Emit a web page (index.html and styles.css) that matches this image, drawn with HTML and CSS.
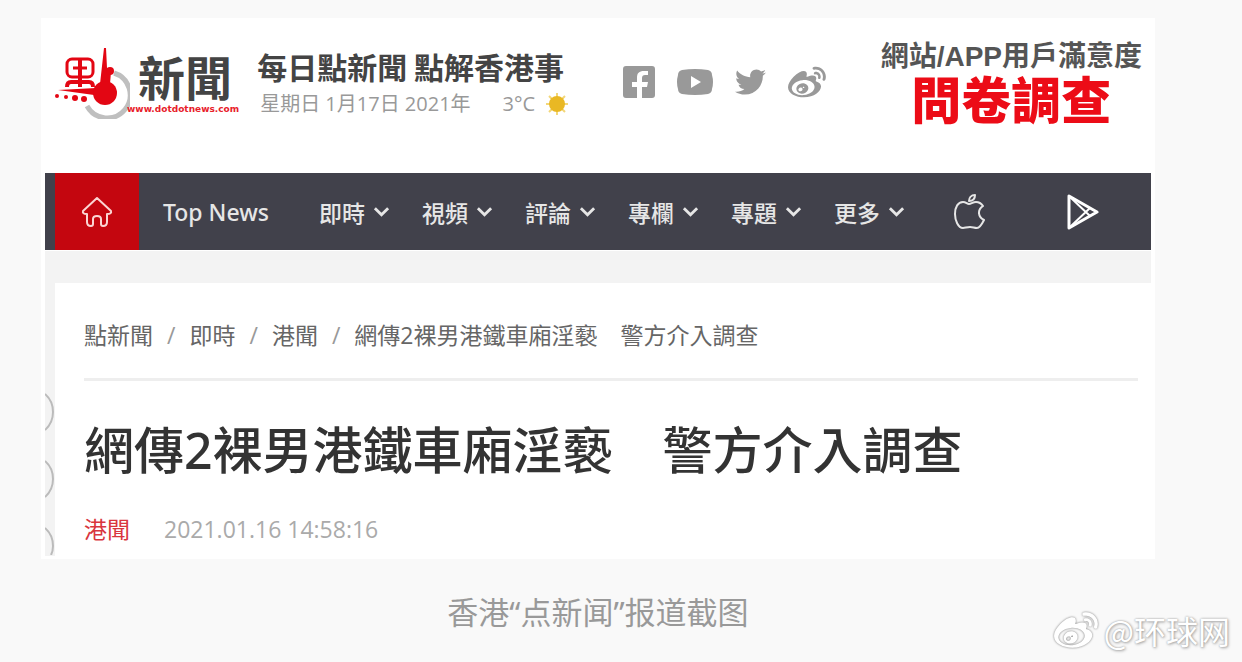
FILE: index.html
```html
<!DOCTYPE html>
<html lang="zh-Hant">
<head>
<meta charset="UTF-8">
<meta name="viewport" content="width=device-width, initial-scale=1.0">
<title>點新聞</title>
<link rel="stylesheet" href="styles.css">
</head>
<body>
<svg class="defs" aria-hidden="true">
  <symbol id="chevron" viewBox="0 0 18 12"><path d="M2 2l7 7 7-7" fill="none" stroke="currentColor" stroke-width="3"/></symbol>
  <symbol id="weibo" viewBox="0 30 514 418"><path d="M407 177.6c7.6-24-13.4-46.8-37.4-41.7-22 4.8-28.8-28.1-7.1-32.8 50.1-10.9 92.3 37.1 76.5 84.8-6.8 21.2-38.8 10.8-32-10.3zM214.8 446.7C108.5 446.7 0 395.3 0 310.4c0-44.3 28-95.4 76.3-143.7C176 67 279.5 65.8 249.9 161c-4 13.1 12.3 5.7 12.3 6 79.5-33.6 140.5-16.8 114 51.4-3.7 9.4 1.1 10.9 8.3 13.1 135.7 42.3 34.8 215.2-169.7 215.2zm143.7-146.3c-5.4-55.7-78.5-94-163.4-85.7-84.8 8.6-148.8 60.3-143.4 116s78.5 94 163.4 85.7c84.8-8.6 148.8-60.3 143.4-116zM347.9 35.1c-25.9 5.6-16.8 43.7 8.3 38.3 72.3-15.2 134.8 52.8 111.7 124-7.4 24.2 29.1 37 37.4 12 31.9-99.8-55.1-195.9-157.4-174.3zm-78.5 311c-17.1 38.8-66.8 60-109.1 46.3-40.8-13.1-58-53.4-40.3-89.7 17.7-35.4 63.1-55.4 103.4-45.1 42 10.8 63.1 50.2 46 88.5zm-86.3-30c-12.9-5.4-30 .3-38 12.9-8.3 12.9-4.3 28 8.6 34 13.1 6 30.8.3 39.1-12.9 8-13.1 3.7-28.3-9.7-34zm32.6-13.4c-5.1-1.7-11.4.6-14.3 5.4-2.9 5.1-1.4 10.6 3.7 12.9 5.1 2 11.7-.3 14.6-5.4 2.8-5.2 1.1-10.9-4-12.9z" fill="currentColor"/></symbol>
</svg>
<figure class="figure">
  <div class="sheet">
    <header class="header">
      <a class="brand" href="#">
        <svg class="brand-mark" width="76" height="72" viewBox="0 0 76 72" aria-hidden="true">
          <path d="M60 26A23 23 0 1 1 33 59" fill="none" stroke="#bfbfbf" stroke-width="5"/>
          <g fill="none" stroke="#e30613" stroke-width="3">
            <rect x="13" y="12" width="26" height="18" rx="5"/>
            <path d="M26 12v28M13 40q0-5 4-5h18q4 0 4 5" stroke-width="4"/>
            <path d="M19 21h14"/>
          </g>
          <path d="M50 1h2l1 20 4 4-1 12H46z" fill="#e30613"/>
          <path d="M4 43l38-2 6-3v14l-8-4z" fill="#e30613"/>
          <g fill="#e30613">
            <circle cx="51" cy="46" r="12"/>
            <circle cx="56" cy="24" r="4"/>
            <circle cx="3" cy="49" r="2"/>
            <circle cx="12" cy="50" r="2"/>
            <circle cx="21" cy="51" r="3"/>
            <circle cx="30" cy="52" r="3"/>
          </g>
        </svg>
        <span class="brand-text">
          <span class="brand-name">新聞</span>
          <span class="brand-url">www.dotdotnews.com</span>
        </span>
      </a>
      <div class="slogan">
        <p class="slogan-text">每日點新聞 點解香港事</p>
        <p class="slogan-date">
          <span>星期日 1月17日 2021年</span>
          <span class="temp">3°C</span>
          <svg width="24" height="24" viewBox="0 0 24 24" aria-hidden="true">
            <path d="M12 1v22M1 12h22M4 4l16 16M20 4L4 20" stroke="#f3d778" stroke-width="2"/>
            <circle cx="12" cy="12" r="8" fill="#e9b824"/>
          </svg>
        </p>
      </div>
      <div class="social">
        <a href="#" aria-label="Facebook">
          <svg width="32" height="34" viewBox="0 0 32 34"><path fill="currentColor" d="M3 1h26a3 3 0 0 1 3 3v26a3 3 0 0 1-3 3H19V22h5l1-5h-6v-4c0-2 1-3 3-3h3V6h-4c-5 0-7 2-7 7v4H9v5h5v11H3a3 3 0 0 1-3-3V4a3 3 0 0 1 3-3z"/></svg>
        </a>
        <a href="#" aria-label="YouTube">
          <svg width="36" height="26" viewBox="0 0 36 26"><path fill="currentColor" fill-rule="evenodd" d="M5 1Q18-1 31 1q4 1 4 5 2 7 0 14 0 4-4 5-13 2-26 0-4-1-4-5-2-7 0-14 0-4 4-5zm9 6v12l10-6z"/></svg>
        </a>
        <a href="#" aria-label="Twitter">
          <svg width="31" height="28" viewBox="0 48 512 416"><path fill="currentColor" d="M459.37 151.716c.325 4.548.325 9.097.325 13.645 0 138.72-105.583 298.558-298.558 298.558-59.452 0-114.68-17.219-161.137-47.106 8.447.974 16.568 1.299 25.34 1.299 49.055 0 94.213-16.568 130.274-44.832-46.132-.975-84.792-31.188-98.112-72.772 6.498.974 12.995 1.624 19.818 1.624 9.421 0 18.843-1.3 27.614-3.573-48.081-9.747-84.143-51.98-84.143-102.985v-1.299c13.969 7.797 30.214 12.67 47.431 13.319-28.264-18.843-46.781-51.005-46.781-87.391 0-19.492 5.197-37.36 14.294-52.954 51.655 63.675 129.3 105.258 216.365 109.807-1.624-7.797-2.599-15.918-2.599-24.04 0-57.828 46.782-104.934 104.934-104.934 30.213 0 57.502 12.67 76.67 33.137 23.715-4.548 46.456-13.32 66.599-25.34-7.798 24.366-24.366 44.833-46.132 57.827 21.117-2.273 41.584-8.122 60.426-16.243-14.292 20.791-32.161 39.308-52.628 54.253z"/></svg>
        </a>
        <a href="#" aria-label="微博">
          <svg width="38" height="32"><use href="#weibo"/></svg>
        </a>
      </div>
      <a class="survey" href="#">
        <span class="survey-top">網站/APP用戶滿意度</span>
        <span class="survey-main">問卷調查</span>
      </a>
    </header>

    <nav class="nav">
      <a class="home" href="#" aria-label="首頁">
        <svg width="32" height="32" viewBox="0 0 32 32" fill="none" stroke="#fbd5d3" stroke-width="2" stroke-linejoin="round"><path d="M16 2L2 15q-1 3 4 3v8q0 4 4 4 2 0 2-2v-5q0-3 4-3t4 3v5q0 2 2 2 4 0 4-4v-8q5 0 4-3z"/></svg>
      </a>
      <a class="top-news" href="#">Top News</a>
      <div class="menu">
        <a href="#">即時<svg width="17" height="12"><use href="#chevron"/></svg></a>
        <a href="#">視頻<svg width="17" height="12"><use href="#chevron"/></svg></a>
        <a href="#">評論<svg width="17" height="12"><use href="#chevron"/></svg></a>
        <a href="#">專欄<svg width="17" height="12"><use href="#chevron"/></svg></a>
        <a href="#">專題<svg width="17" height="12"><use href="#chevron"/></svg></a>
        <a href="#">更多<svg width="17" height="12"><use href="#chevron"/></svg></a>
      </div>
      <div class="apps">
        <a href="#" aria-label="App Store">
          <svg width="32" height="36" viewBox="0 0 32 36" fill="none" stroke="currentColor" stroke-width="2" stroke-linejoin="round"><path d="M16 10c2 0 4-2 7-2 3 0 5 1 7 4-6 4-5 11 1 14-2 4-4 8-7 8s-4-1-7-1-5 1-7 1C5 34 2 26 2 20 2 13 5 8 10 8c3 0 4 2 6 2zM16 7c0-3 2-6 6-6 0 4-2 6-6 6z"/></svg>
        </a>
        <a href="#" aria-label="Google Play">
          <svg width="32" height="36" viewBox="0 0 32 36" fill="none" stroke="#fff" stroke-width="3" stroke-linejoin="round"><path d="M2 2v32l28-16z"/><path d="M3 3l20 19M3 33l20-19" stroke-width="2"/></svg>
        </a>
      </div>
    </nav>

    <div class="content">
      <div class="gutter" aria-hidden="true">
        <svg width="10" height="38" viewBox="0 0 10 38"><path d="M0 1q8 7 8 18T0 37"/></svg>
        <svg width="10" height="38" viewBox="0 0 10 38"><path d="M0 1q8 7 8 18T0 37"/></svg>
        <svg width="10" height="28" viewBox="0 0 10 28"><path d="M0 1q8 7 8 18 0 5-2 9"/></svg>
      </div>
      <article class="article">
        <nav class="breadcrumb">
          <a href="#">點新聞</a><span class="sep">/</span><a href="#">即時</a><span class="sep">/</span><a href="#">港聞</a><span class="sep">/</span><span>網傳2裸男港鐵車廂淫褻　警方介入調查</span>
        </nav>
        <h1 class="title">網傳2裸男港鐵車廂淫褻　警方介入調查</h1>
        <p class="meta"><a href="#">港聞</a><time datetime="2021-01-16T14:58:16">2021.01.16 14:58:16</time></p>
      </article>
    </div>
  </div>
  <figcaption class="caption" lang="zh-Hans">香港“点新闻”报道截图</figcaption>
</figure>
<div class="watermark" lang="zh-Hans">
  <svg width="44" height="38"><use href="#weibo"/></svg>
  <span>@环球网</span>
</div>
</body>
</html>
```
FILE: styles.css
```css
* { box-sizing: border-box; }
body {
  position: relative;
  min-height: 100vh;
  margin: 0;
  background: #f9f9f9;
  font-family: "Open Sans", "Noto Sans CJK TC", sans-serif;
  color: #333;
}
a { color: inherit; text-decoration: none; }
p { margin: 0; }
svg { display: block; flex: none; }
.defs { position: absolute; width: 0; height: 0; }

.figure {
  margin: 0;
  padding: 18px 87px 0 41px;
}
.sheet { padding-bottom: 3px; background: #fff; }

/* header */
.header {
  display: flex;
  align-items: flex-start;
  height: 155px;
  padding: 20px 13px 0;
  white-space: nowrap;
}
.brand { display: flex; padding-top: 9px; }
.brand-text {
  display: flex;
  flex-direction: column;
  margin-left: -3px;
}
.brand-name {
  padding: 10px 0 0 11px;
  font-family: "Liberation Sans", "Noto Sans CJK TC", sans-serif;
  font-size: 47px;
  font-weight: 700;
  line-height: 46px;
  color: #444;
}
.brand-url {
  font-family: "DejaVu Sans", sans-serif;
  font-size: 9px;
  font-weight: 700;
  line-height: 12px;
  color: #e8202a;
}
.slogan { margin-left: 18px; padding-top: 10px; }
.slogan-text {
  font-family: "Noto Sans CJK TC", sans-serif;
  font-size: 30px;
  font-weight: 700;
  line-height: 36px;
  color: #444;
}
.slogan-date {
  display: flex;
  align-items: center;
  padding-left: 3px;
  font-size: 20px;
  line-height: 40px;
  color: #999;
}
.temp { margin: 0 10px 0 32px; }
.social {
  display: flex;
  align-items: center;
  gap: 22px;
  margin-left: 54px;
  padding-top: 27px;
  color: #999;
}
.survey {
  display: flex;
  flex-direction: column;
  align-items: center;
  margin-left: auto;
  padding-top: 2px;
  font-family: "Liberation Sans", "Noto Sans CJK TC", sans-serif;
  font-weight: 700;
}
.survey-top { font-size: 28px; line-height: 34px; color: #555; }
.survey-main { font-size: 50px; font-weight: 900; line-height: 56px; color: #ec0c17; }

/* nav bar */
.nav {
  display: flex;
  align-items: center;
  height: 77px;
  margin: 0 4px;
  padding-left: 10px;
  background: #41414b;
  font-family: "Noto Sans", "Noto Sans CJK TC", sans-serif;
  font-size: 23px;
  font-weight: 500;
  color: #e6e6e6;
  white-space: nowrap;
}
.home {
  display: flex;
  align-items: center;
  justify-content: center;
  width: 84px;
  height: 100%;
  background: #c4060f;
}
.top-news { margin: 0 50px 0 24px; }
.menu { display: flex; gap: 32px; }
.menu a { display: flex; align-items: center; gap: 8px; }
.apps { display: flex; gap: 82px; margin-left: 48px; }

/* article */
.content {
  display: flex;
  margin: 1px 0 0 4px;
}
.gutter {
  display: flex;
  flex-direction: column;
  gap: 29px;
  width: 10px;
  padding-top: 142px;
  background: #f3f3f3;
  fill: none;
  stroke: #bbb;
  stroke-width: 2px;
}
.article {
  flex: 1;
  margin-right: 4px;
  padding: 34px 13px 12px 29px;
  border-top: 32px solid #f3f3f3;
}
.breadcrumb {
  padding-bottom: 25px;
  border-bottom: 3px solid #eee;
  font-size: 23px;
  line-height: 36px;
  color: #666;
}
.sep { margin: 0 14px; color: #999; }
.title {
  margin: 34px 0 29px;
  font-family: "Noto Sans", "Noto Sans CJK TC", sans-serif;
  font-size: 50px;
  font-weight: 500;
  line-height: 70px;
}
.meta {
  display: flex;
  gap: 34px;
  font-size: 23px;
  line-height: 30px;
  color: #aaa;
}
.meta a { color: #d9363e; }

.caption {
  margin-top: 33px;
  font-family: "Noto Sans", "Noto Sans CJK SC", sans-serif;
  font-size: 31px;
  line-height: 40px;
  text-align: center;
  color: #999;
}
.watermark {
  position: absolute;
  right: 12px;
  bottom: 12px;
  display: flex;
  align-items: center;
  gap: 6px;
  font-family: "Noto Sans CJK SC", sans-serif;
  font-size: 32px;
  line-height: 40px;
  color: #fff;
  text-shadow: 0 0 2px #999, 1px 1px 3px #aaa;
}
.watermark svg { filter: drop-shadow(0 0 1px #777); }
```
